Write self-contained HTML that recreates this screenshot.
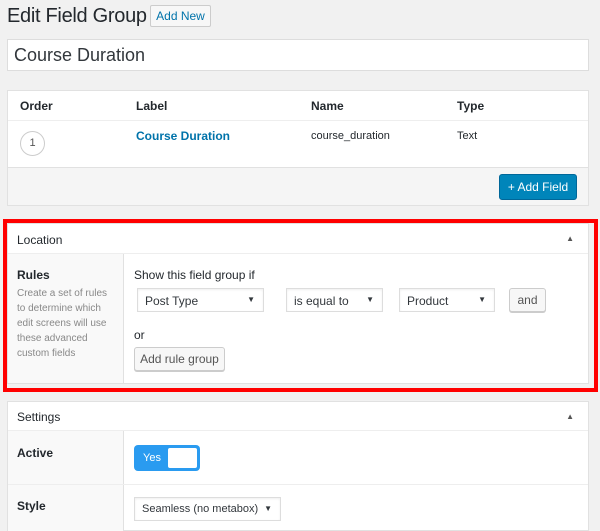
<!DOCTYPE html>
<html><head><style>
*{box-sizing:border-box;margin:0;padding:0}
body{width:600px;height:529px;overflow:hidden;background:#f1f1f1;font-family:"Liberation Sans",sans-serif;color:#23282d;position:relative;font-size:12px}
.a{position:absolute}
.panel{position:absolute;left:7px;width:582px;background:#fff;border:1px solid #e1e1e1}
.sel{position:absolute;height:24px;border:1px solid #ddd;background:#fff;font-size:12px;padding:5px 7px;color:#32373c;box-shadow:inset 0 1px 2px rgba(0,0,0,.07);white-space:nowrap}
.sel:after{content:"▼";position:absolute;right:8px;top:6px;font-size:8px}
.btn{position:absolute;border:1px solid #ccc;background:#f7f7f7;border-radius:3px;font-size:12px;color:#555;text-align:center;box-shadow:0 1px 0 #ccc}
</style></head><body>
<div class="a" style="left:7px;top:5px;font-size:20px;color:#23282d;letter-spacing:-0.3px">Edit Field Group</div>
<div class="a" style="left:150px;top:5px;width:61px;height:22px;border:1px solid #ccc;background:#f7f7f7;border-radius:2px;color:#0073aa;font-size:12px;text-align:center;line-height:20px">Add New</div>
<div class="a" style="left:7px;top:39px;width:582px;height:32px;background:#fff;border:1px solid #ddd;font-size:18px;padding:5px 6px;color:#32373c">Course Duration</div>

<div class="panel" style="top:90px;height:116px">
 <div class="a" style="left:0;top:0;width:580px;height:30px;border-bottom:1px solid #eee"></div>
 <div class="a" style="left:12px;top:8px;font-weight:bold">Order</div>
 <div class="a" style="left:128px;top:8px;font-weight:bold">Label</div>
 <div class="a" style="left:303px;top:8px;font-weight:bold">Name</div>
 <div class="a" style="left:449px;top:8px;font-weight:bold">Type</div>
 <div class="a" style="left:12px;top:40px;width:25px;height:25px;border:1px solid #ccc;border-radius:50%;text-align:center;line-height:23px;font-size:11px;color:#555">1</div>
 <div class="a" style="left:128px;top:38px;font-weight:bold;color:#0073aa">Course Duration</div>
 <div class="a" style="left:303px;top:39px;font-size:11px">course_duration</div>
 <div class="a" style="left:449px;top:39px;font-size:11px">Text</div>
 <div class="a" style="left:0;top:76px;width:580px;height:38px;background:#f5f5f5;border-top:1px solid #e1e1e1"></div>
 <div class="a" style="left:491px;top:83px;width:78px;height:26px;background:#0085ba;border:1px solid #006799;border-radius:3px;color:#fff;text-align:center;line-height:24px;font-size:12px">+ Add Field</div>
</div>

<div class="panel" style="top:223px;height:161px">
 <div class="a" style="left:0;top:0;width:580px;height:30px;border-bottom:1px solid #eee"></div>
 <div class="a" style="left:9px;top:9px;font-size:12px">Location</div>
 <div class="a" style="right:14px;top:10px;font-size:8px;color:#555">▲</div>
 <div class="a" style="left:0;top:30px;width:116px;height:129px;background:#f9f9f9;border-right:1px solid #e1e1e1"></div>
 <div class="a" style="left:9px;top:44px;font-weight:bold">Rules</div>
 <div class="a" style="left:9px;top:62px;width:100px;font-size:10px;line-height:15px;color:#888">Create a set of rules to determine which edit screens will use these advanced custom fields</div>
 <div class="a" style="left:126px;top:44px">Show this field group if</div>
 <div class="sel" style="left:129px;top:64px;width:127px">Post Type</div>
 <div class="sel" style="left:278px;top:64px;width:97px">is equal to</div>
 <div class="sel" style="left:391px;top:64px;width:96px">Product</div>
 <div class="btn" style="left:501px;top:64px;width:37px;height:24px;line-height:22px">and</div>
 <div class="a" style="left:126px;top:104px">or</div>
 <div class="btn" style="left:126px;top:123px;width:91px;height:24px;line-height:22px">Add rule group</div>
</div>
<div class="a" style="left:3px;top:219px;width:595px;height:173px;border:4px solid #f00"></div>

<div class="panel" style="top:401px;height:130px">
 <div class="a" style="left:0;top:0;width:580px;height:29px;border-bottom:1px solid #eee"></div>
 <div class="a" style="left:9px;top:8px">Settings</div>
 <div class="a" style="right:14px;top:10px;font-size:8px;color:#555">▲</div>
 <div class="a" style="left:0;top:29px;width:116px;height:100px;background:#f9f9f9;border-right:1px solid #e1e1e1"></div>
 <div class="a" style="left:0;top:82px;width:580px;border-top:1px solid #eee"></div>
 <div class="a" style="left:9px;top:44px;font-weight:bold">Active</div>
 <div class="a" style="left:126px;top:43px;width:66px;height:26px;background:#2a9bf0;border-radius:4px"></div>
 <div class="a" style="left:135px;top:50px;color:#fff;font-size:11px">Yes</div>
 <div class="a" style="left:160px;top:46px;width:29px;height:20px;background:#fff;border-radius:2px"></div>
 <div class="a" style="left:9px;top:97px;font-weight:bold">Style</div>
 <div class="sel" style="left:126px;top:95px;width:147px;font-size:11px">Seamless (no metabox)</div>
</div>
</body></html>
